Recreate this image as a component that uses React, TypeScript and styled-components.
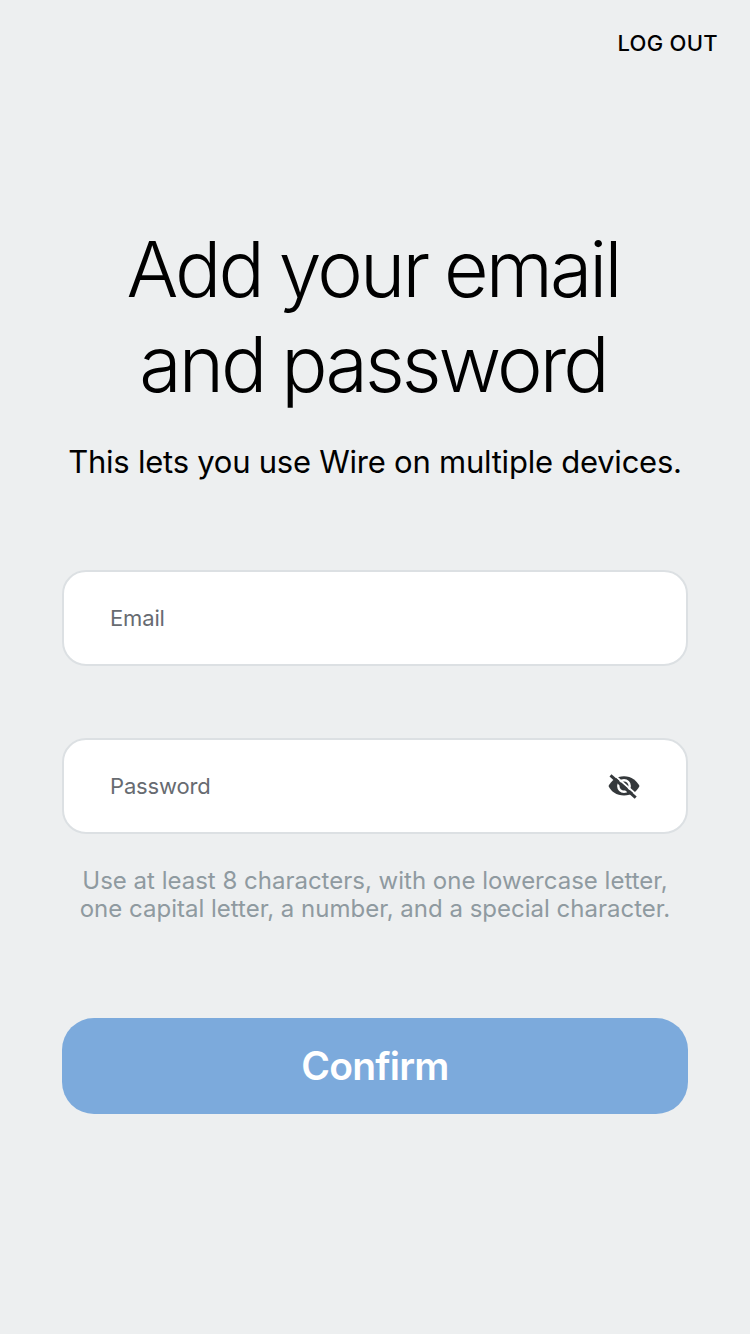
import React, { useState } from "react";
import styled, { createGlobalStyle } from "styled-components";

const GlobalStyle = createGlobalStyle`
  *, *::before, *::after { box-sizing: border-box; }
  body { margin: 0; background: #edeff0; font-family: Inter, "Liberation Sans", sans-serif; color: #000; }
  button, input { font-family: inherit; }
`;

const Screen = styled.div`
  height: 1334px;
  background: #edeff0;
  display: flex;
  flex-direction: column;
`;

const TopBar = styled.header`
  display: flex;
  justify-content: flex-end;
  height: 222px;
  padding: 27px 32px 0 0;
`;

const LogOut = styled.button`
  height: 32px;
  padding: 0;
  border: 0;
  background: none;
  color: #000;
  font-size: 22px;
  line-height: 32px;
  font-weight: 550;
  letter-spacing: 0.3px;
`;

const Content = styled.main`
  display: flex;
  flex-direction: column;
  padding: 0 62px;
`;

const Title = styled.h1`
  margin: 0 -18px 0 -22px;
  height: 190px;
  text-align: center;
  font-size: 77px;
  line-height: 95px;
  font-weight: 320;
  letter-spacing: -2.9px;
  word-spacing: -2px;
  white-space: nowrap;
`;

const Subtitle = styled.p`
  margin: 30px -20px 88px;
  height: 40px;
  line-height: 40px;
  text-align: center;
  font-size: 31px;
  letter-spacing: -0.24px;
  white-space: nowrap;
`;

const Field = styled.label<{ $gap: number }>`
  display: flex;
  align-items: center;
  height: 96px;
  margin-bottom: ${(p) => p.$gap}px;
  padding: 0 46px;
  border: 2px solid #dce0e3;
  border-radius: 24px;
  background: #fff;
`;

const Input = styled.input`
  flex: 1;
  min-width: 0;
  padding: 0;
  border: 0;
  outline: 0;
  background: transparent;
  font-size: 22px;
  letter-spacing: -0.15px;
  &::placeholder { color: #676b71; opacity: 1; }
`;

const IconButton = styled.button`
  display: flex;
  padding: 0;
  border: 0;
  background: none;
  color: #34383b;
`;

const Hint = styled.p`
  margin: 0 -20px 95px;
  height: 56px;
  text-align: center;
  color: #8f9aa0;
  font-size: 24px;
  line-height: 28px;
  white-space: nowrap;
`;

const Confirm = styled.button`
  height: 96px;
  padding: 0 0 2px;
  border: 0;
  border-radius: 32px;
  background: #7caadc;
  color: #fff;
  font-size: 39px;
  font-weight: 600;
  letter-spacing: -0.8px;
`;

const EyeOff = () => (
  <svg width="32" height="32" viewBox="0 0 32 32" fill="none">
    <path d="M16 6.2C8.5 6.2 3 11 0.5 16C3 21.500 8.500 25.500 16 25.500S29 21.500 31.500 16C29 11 23.500 6.200 16 6.200Z" fill="currentColor" />
    <circle cx="16" cy="16" r="5.700" stroke="#fff" strokeWidth="2.400" />
    <path d="M4.500 3.500L29.500 25.500" stroke="#fff" strokeWidth="1.800" />
    <path d="M2.500 5.300L27.700 27.600" stroke="currentColor" strokeWidth="3" />
  </svg>
);

export default function App() {
  const [visible, setVisible] = useState(false);
  return (
    <>
      <GlobalStyle />
      <Screen>
        <TopBar><LogOut>LOG OUT</LogOut></TopBar>
        <Content>
          <Title>Add your email<br />and password</Title>
          <Subtitle>This lets you use Wire on multiple devices.</Subtitle>
          <Field $gap={72}><Input type="email" placeholder="Email" /></Field>
          <Field $gap={33}>
            <Input type={visible ? "text" : "password"} placeholder="Password" />
            <IconButton aria-label="Show password" onClick={() => setVisible(!visible)}><EyeOff /></IconButton>
          </Field>
          <Hint>Use at least 8 characters, with one lowercase letter,<br />one capital letter, a number, and a special character.</Hint>
          <Confirm>Confirm</Confirm>
        </Content>
      </Screen>
    </>
  );
}
